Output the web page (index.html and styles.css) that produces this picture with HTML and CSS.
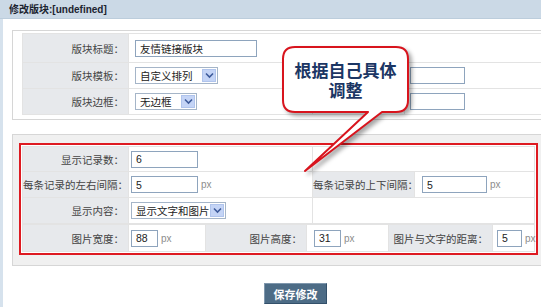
FILE: index.html
```html
<!DOCTYPE html>
<html lang="zh-CN">
<head>
    <meta charset="UTF-8">
    <title>修改版块</title>
    <link rel="stylesheet" href="styles.css">
</head>
<body>
<div class="page">
    <div class="titlebar">修改版块:[undefined]</div>
    <div class="content">
        <div class="panel panel-top">
            <table class="form-table basic">
                <colgroup><col class="c-lbl"><col class="c-val"><col class="c-lbl2"><col></colgroup>
                <tr class="r1">
                    <td class="lbl">版块标题：</td>
                    <td colspan="3" class="val pad-l"><input class="txt w-title" type="text" value="友情链接版块"></td>
                </tr>
                <tr>
                    <td class="lbl">版块模板：</td>
                    <td class="val pad-l"><span class="sel w-tpl">自定义排列<i class="arrow"><svg width="9" height="7" viewBox="0 0 9 7"><path d="M1 1.5 L4.5 5 L8 1.5" fill="none" stroke="#3d5a9a" stroke-width="1.6"/></svg></i></span></td>
                    <td class="val"></td>
                    <td class="val pad-r"><input class="txt w-side" type="text" value=""></td>
                </tr>
                <tr>
                    <td class="lbl">版块边框：</td>
                    <td class="val pad-l"><span class="sel w-border">无边框<i class="arrow"><svg width="9" height="7" viewBox="0 0 9 7"><path d="M1 1.5 L4.5 5 L8 1.5" fill="none" stroke="#3d5a9a" stroke-width="1.6"/></svg></i></span></td>
                    <td class="val"></td>
                    <td class="val pad-r"><input class="txt w-side" type="text" value=""></td>
                </tr>
            </table>
        </div>

        <div class="panel panel-list">
            <div class="redbox">
                <table class="form-table list">
                    <colgroup><col class="c-lbl"><col class="c-val2"><col class="c-lbl3"><col></colgroup>
                    <tr class="h25">
                        <td class="lbl">显示记录数：</td>
                        <td class="val pad-s"><input class="txt w-num" type="text" value="6"></td>
                        <td class="val" colspan="2"></td>
                    </tr>
                    <tr>
                        <td class="lbl">每条记录的左右间隔：</td>
                        <td class="val pad-s"><input class="txt w-num" type="text" value="5"><span class="unit">px</span></td>
                        <td class="lbl">每条记录的上下间隔：</td>
                        <td class="val pad-m"><input class="txt w-num2" type="text" value="5"><span class="unit">px</span></td>
                    </tr>
                    <tr>
                        <td class="lbl">显示内容：</td>
                        <td class="val pad-s"><span class="sel w-show">显示文字和图片<i class="arrow"><svg width="9" height="7" viewBox="0 0 9 7"><path d="M1 1.5 L4.5 5 L8 1.5" fill="none" stroke="#3d5a9a" stroke-width="1.6"/></svg></i></span></td>
                        <td class="val" colspan="2"></td>
                    </tr>
                </table>
                <table class="form-table pics">
                    <colgroup><col class="c-lbl"><col class="p2"><col class="p3"><col class="p4"><col class="p5"><col></colgroup>
                    <tr>
                        <td class="lbl">图片宽度：</td>
                        <td class="val pad-s"><input class="txt w-small" type="text" value="88"><span class="unit">px</span></td>
                        <td class="lbl">图片高度：</td>
                        <td class="val pad-m"><input class="txt w-small" type="text" value="31"><span class="unit">px</span></td>
                        <td class="lbl">图片与文字的距离：</td>
                        <td class="val pad-x"><input class="txt w-tiny" type="text" value="5"><span class="unit">px</span></td>
                    </tr>
                </table>
            </div>
        </div>

        <div class="actions">
            <button class="btn-save" type="button">保存修改</button>
        </div>
    </div>

    <!-- callout note over the form -->
    <svg class="callout-shape" width="591" height="307" viewBox="0 0 591 307">
        <path d="M295 47 H396 Q408 47 408 59 V100 Q408 112 396 112 H382 L305 171 L368 112 H295 Q283 112 283 100 V59 Q283 47 295 47 Z"
              fill="#fff" stroke="#d8141d" stroke-width="2" stroke-linejoin="round"/>
    </svg>
    <div class="callout-text">根据自己具体<br>调整</div>
</div>
</body>
</html>
```

FILE: styles.css
```css
body {
    margin: 0;
    font-family: "Liberation Sans", "Noto Sans CJK SC", sans-serif;
    font-size: 10.5px;
    color: #333;
    background-color: #fff;
    overflow: hidden;
}
.page {
    position: relative;
    width: 591px;
    height: 307px;
    overflow: hidden;
}
.titlebar {
    height: 18px;
    line-height: 19px;
    padding-left: 9px;
    background-color: #cbd9e6;
    border-bottom: 1px solid #bccddc;
    font-size: 10px;
    font-weight: bold;
    color: #1c2430;
}
.content {
    border-left: 3px solid #d6e2ed;
    padding: 11px 0 6px 9px;
}
.panel {
    width: 570px;
    border: 1px solid #d6d6d6;
}
.panel-top {
    background-color: #fff;
    padding: 2px 0 4px 9px;
}
.panel-list {
    background-color: #f0f0f0;
    margin-top: 14px;
    padding: 8px 0 10px 6px;
}
.redbox {
    width: 519px;
    box-sizing: border-box;
    border: 2px solid #de1a21;
    padding: 1px;
    background-color: #fff;
}
.form-table {
    border-collapse: collapse;
    table-layout: fixed;
}
.form-table.basic {
    width: 548px;
}
.form-table.list,
.form-table.pics {
    width: 513px;
}
.form-table td {
    border: 1px solid #e3e3e3;
    padding: 0;
    height: 25px;
    white-space: nowrap;
    vertical-align: middle;
}
.form-table tr.r1 td {
    height: 28px;
}
.form-table tr.h25 td {
    height: 24px;
}
.form-table.pics td {
    height: 26px;
}
.c-lbl { width: 106px; }
.c-val { width: 184px; }
.c-lbl2 { width: 92px; }
.c-val2 { width: 184px; }
.c-lbl3 { width: 102px; }
.p2 { width: 77px; }
.p3 { width: 101px; }
.p4 { width: 82px; }
.p5 { width: 104px; }

.lbl {
    background-color: #e7e9ec;
    text-align: right;
    padding-right: 4px !important;
    color: #444;
    font-family: "Noto Sans CJK SC", sans-serif;
}
.val {
    background-color: #fff;
}
.pad-l { padding-left: 6px !important; }
.pad-r { padding-left: 5px !important; }
.pad-s { padding-left: 2px !important; }
.pad-m { padding-left: 7px !important; }
.pad-x { padding-left: 4px !important; }

.txt {
    box-sizing: border-box;
    height: 17px;
    margin: 0;
    padding: 0 4px;
    border: 1px solid #8ea4bd;
    background-color: #fff;
    font-family: "Liberation Sans", "Noto Sans CJK SC", sans-serif;
    font-size: 10.5px;
    color: #222;
    vertical-align: middle;
}
.w-title { width: 122px; }
.w-side { width: 55px; }
.w-num { width: 67px; }
.w-num2 { width: 65px; }
.w-small { width: 27px; }
.w-tiny { width: 25px; }

.sel {
    display: inline-flex;
    align-items: center;
    box-sizing: border-box;
    height: 17px;
    padding: 0 1px 0 4px;
    border: 1px solid #a5b5c8;
    background-color: #fff;
    font-family: "Noto Sans CJK SC", sans-serif;
    color: #222;
    vertical-align: middle;
}
.sel .arrow {
    display: flex;
    align-items: center;
    justify-content: center;
    width: 14px;
    height: 13px;
    margin-left: auto;
    background-color: #c4d4f6;
    border: 1px solid #b0c4ec;
    box-sizing: border-box;
}
.w-tpl { width: 83px; }
.w-border { width: 62px; }
.w-show { width: 95px; }

.unit {
    margin-left: 3px;
    font-size: 10px;
    color: #8c8c8c;
    vertical-align: middle;
}

.actions {
    padding-right: 12px;
    text-align: center;
}
.btn-save {
    margin-top: 17px;
    width: 63px;
    height: 21px;
    padding: 0;
    background-color: #4d6c86;
    border: 1px solid #33506a;
    border-top-color: #7f97ad;
    border-left-color: #7f97ad;
    color: #fff;
    font-family: "Noto Sans CJK SC", sans-serif;
    font-size: 11px;
    font-weight: bold;
}

.callout-shape {
    position: absolute;
    left: 0;
    top: 0;
    filter: drop-shadow(3px 3px 2px rgba(0, 0, 0, 0.35));
}
.callout-text {
    position: absolute;
    left: 283px;
    top: 60px;
    width: 125px;
    text-align: center;
    font-family: "Noto Sans CJK SC", sans-serif;
    font-size: 17px;
    line-height: 20px;
    font-weight: bold;
    color: #1b3664;
}
```
